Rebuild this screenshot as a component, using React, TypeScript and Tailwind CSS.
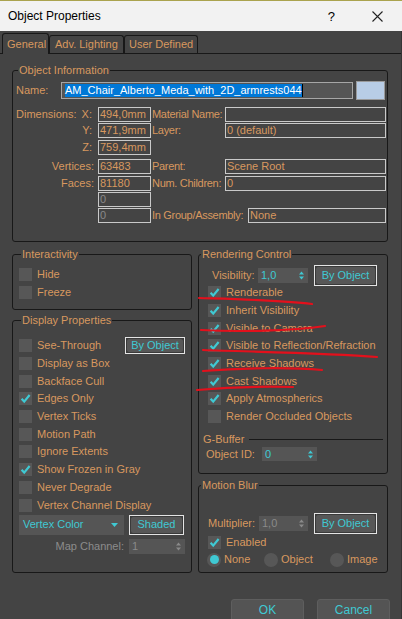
import React from 'react';

const orange = 'text-[#d8985f]';
const cyan = 'text-[#3fc9d3]';

function Tick() {
  return (
    <svg width="13" height="13" viewBox="0 0 13 13">
      <path d="M2.6 6.8 L5.2 9.6 L10.6 3" fill="none" stroke="#3fc9d3" strokeWidth="2.2" />
    </svg>
  );
}

function CheckRow({ label, on = false }: { label: string; on?: boolean }) {
  return (
    <div className="flex h-[17.7px] items-center">
      <span className="flex h-[13px] w-[13px] shrink-0 items-center justify-center bg-[#575757]">
        {on && <Tick />}
      </span>
      <span className={`ml-[5px] whitespace-nowrap ${orange}`}>{label}</span>
    </div>
  );
}

function Arrows({ color }: { color: string }) {
  return (
    <svg width="5" height="9" viewBox="0 0 5 9">
      <path d="M0 3.5L2.5 0.5L5 3.5Z M0 5.5L2.5 8.5L5 5.5Z" fill={color} />
    </svg>
  );
}

function Spinner({ value, className, disabled = false }: { value: string; className: string; disabled?: boolean }) {
  return (
    <div
      className={`flex shrink-0 items-center justify-between bg-[#555555] pl-[3px] pr-[4px] ${
        disabled ? 'text-[#8a8a8a]' : cyan
      } ${className}`}
    >
      <span>{value}</span>
      <Arrows color={disabled ? '#8a8a8a' : '#3fc9d3'} />
    </div>
  );
}

function OutlinedButton({ label, className }: { label: string; className: string }) {
  return (
    <div className={`shrink-0 border border-[#e4e4e4] bg-[#3a3a3a] p-[1px] ${className}`}>
      <div className={`flex h-full items-center justify-center rounded-[2px] bg-[#575757] ${cyan}`}>{label}</div>
    </div>
  );
}

function Group({ title, className, children }: { title: string; className?: string; children: React.ReactNode }) {
  return (
    <fieldset className={`rounded-[3px] border border-[#181818] ${className ?? ''}`}>
      <legend className={`ml-[2px] px-[1px] leading-[13px] ${orange}`}>{title}</legend>
      {children}
    </fieldset>
  );
}

function Field({ value = '', w, dim = false }: { value?: string; w: string; dim?: boolean }) {
  return (
    <div
      className={`flex h-[15px] shrink-0 items-center whitespace-nowrap border border-[#c9c9c9] pl-[1px] ${w} ${
        dim ? 'text-[#8a8a8a]' : orange
      }`}
    >
      {value}
    </div>
  );
}

function Label({ text, w }: { text: string; w: string }) {
  return <span className={`shrink-0 whitespace-nowrap pl-[1px] tracking-[-0.3px] ${w}`}>{text}</span>;
}

function Radio({ label, on = false, w }: { label: string; on?: boolean; w: string }) {
  return (
    <div className={`flex items-center ${w}`}>
      <span className="flex h-[14px] w-[14px] items-center justify-center rounded-full bg-[#575757]">
        {on && <span className="h-[9px] w-[9px] rounded-full bg-[#3fc9d3]" />}
      </span>
      <span className={`ml-[3px] ${orange}`}>{label}</span>
    </div>
  );
}

export default function App() {
  return (
    <div className="relative h-[619px] w-[402px] overflow-hidden bg-[#444444] font-['Liberation_Sans',Arial,sans-serif] text-[11px] leading-[13px]">
      {/* Title bar */}
      <div className="flex h-[31px] items-center border-t border-[#aaa34e] bg-[#f2f2f2] pl-[8px] text-[12px] text-black">
        <span>Object Properties</span>
        <span className="ml-auto text-[13px]">?</span>
        <svg className="ml-[37px] mr-[19px]" width="11" height="11" viewBox="0 0 11 11">
          <path d="M0.5 0.5L10.5 10.5M10.5 0.5L0.5 10.5" stroke="#222" strokeWidth="1.1" />
        </svg>
      </div>

      <div className="border-r border-[#353535]">
        {/* Tabs */}
        <div className="flex h-[23px] items-end border-b border-[#181818] pl-[2px]">
          <div className={`relative -mb-[1px] flex h-[21px] w-[47px] items-center rounded-t-[3px] border border-b-0 border-[#181818] bg-[#444444] pl-[4px] ${orange}`}>
            General
          </div>
          <div className={`flex h-[18px] w-[75px] items-center rounded-t-[3px] border border-b-0 border-[#181818] pl-[5px] ${orange}`}>
            Adv. Lighting
          </div>
          <div className={`flex h-[18px] w-[74px] items-center rounded-t-[3px] border border-b-0 border-[#181818] pl-[4px] ${orange}`}>
            User Defined
          </div>
        </div>

        <div className="px-[12px]">
          {/* Object Information */}
          <Group title="Object Information" className="mt-[10px] w-[376px] pb-[18px] pl-[3px] pt-[4px]">
            <div className={`flex h-[19px] items-center ${orange}`}>
              <span className="w-[45px]">Name:</span>
              <div className="flex h-[17px] w-[292px] items-center border border-[#a6a6a6] bg-[#555555] pl-[3px]">
                <span className="whitespace-nowrap bg-[#0078d7] leading-[13px] text-white">AM_Chair_Alberto_Meda_with_2D_armrests044</span>
                <span className="h-[13px] w-[1px] bg-black" />
              </div>
              <span className="ml-[3px] h-[19px] w-[29px] border border-[#9a9a9a] bg-[#b8cde6]" />
            </div>

            <div className={`mt-[7px] flex items-center ${orange}`}>
              <div className="flex w-[82px] shrink-0 justify-between pr-[6px]">
                <span>Dimensions:</span>
                <span>X:</span>
              </div>
              <Field w="w-[53px]" value="494,0mm" />
              <Label w="w-[74px]" text="Material Name:" />
              <Field w="w-[161px]" />
            </div>
            <div className={`mt-[1px] flex items-center ${orange}`}>
              <div className="w-[82px] shrink-0 pr-[6px] text-right">Y:</div>
              <Field w="w-[53px]" value="471,9mm" />
              <Label w="w-[74px]" text="Layer:" />
              <Field w="w-[161px]" value="0 (default)" />
            </div>
            <div className={`mt-[2px] flex items-center ${orange}`}>
              <div className="w-[82px] shrink-0 pr-[6px] text-right">Z:</div>
              <Field w="w-[53px]" value="759,4mm" />
            </div>
            <div className={`mt-[4px] flex items-center ${orange}`}>
              <div className="w-[82px] shrink-0 pr-[4px] text-right">Vertices:</div>
              <Field w="w-[53px]" value="63483" />
              <Label w="w-[74px]" text="Parent:" />
              <Field w="w-[161px]" value="Scene Root" />
            </div>
            <div className={`mt-[2px] flex items-center ${orange}`}>
              <div className="w-[82px] shrink-0 pr-[4px] text-right">Faces:</div>
              <Field w="w-[53px]" value="81180" />
              <Label w="w-[74px]" text="Num. Children:" />
              <Field w="w-[161px]" value="0" />
            </div>
            <div className="mt-[1px] flex items-center">
              <div className="w-[82px] shrink-0" />
              <Field w="w-[53px]" value="0" dim />
            </div>
            <div className={`mt-[1px] flex items-center ${orange}`}>
              <div className="w-[82px] shrink-0" />
              <Field w="w-[53px]" value="0" dim />
              <Label w="w-[97px]" text="In Group/Assembly:" />
              <Field w="w-[138px]" value="None" />
            </div>
          </Group>

          <div className="mt-[6px] flex gap-[6px]">
            {/* Left column */}
            <div className="w-[180px] shrink-0">
              <Group title="Interactivity" className="pb-[8px] pl-[6px] pt-[4px]">
                <div className="flex h-[18px] items-center">
                  <span className="h-[13px] w-[13px] bg-[#575757]" />
                  <span className={`ml-[5px] ${orange}`}>Hide</span>
                </div>
                <div className="flex h-[18px] items-center">
                  <span className="h-[13px] w-[13px] bg-[#575757]" />
                  <span className={`ml-[5px] ${orange}`}>Freeze</span>
                </div>
              </Group>

              <Group title="Display Properties" className="mt-[4px] pb-[18px] pl-[6px] pr-[6px] pt-[10px]">
                <div className="flex items-center justify-between">
                  <CheckRow label="See-Through" />
                  <OutlinedButton label="By Object" className="h-[17px] w-[60px]" />
                </div>
                <CheckRow label="Display as Box" />
                <CheckRow label="Backface Cull" />
                <CheckRow label="Edges Only" on />
                <CheckRow label="Vertex Ticks" />
                <CheckRow label="Motion Path" />
                <CheckRow label="Ignore Extents" />
                <CheckRow label="Show Frozen in Gray" on />
                <CheckRow label="Never Degrade" />
                <CheckRow label="Vertex Channel Display" />
                <div className="mt-[1px] flex h-[20px] items-center">
                  <div className={`flex h-[20px] w-[105px] shrink-0 items-center justify-between bg-[#555555] pl-[4px] pr-[6px] ${cyan}`}>
                    <span>Vertex Color</span>
                    <svg width="7" height="4" viewBox="0 0 7 4">
                      <path d="M0 0H7L3.5 4Z" fill="#3fc9d3" />
                    </svg>
                  </div>
                  <OutlinedButton label="Shaded" className="ml-[5px] h-[20px] w-[55px]" />
                </div>
                <div className="mt-[4px] flex h-[15px] items-center">
                  <span className="w-[105px] shrink-0 whitespace-nowrap text-right text-[#8c8c8c]">Map Channel:</span>
                  <Spinner value="1" disabled className="ml-[5px] h-[15px] w-[56px] bg-[#4f4f4f]" />
                </div>
              </Group>
            </div>

            {/* Right column */}
            <div className="w-[190px] shrink-0">
              <Group title="Rendering Control" className="pb-[11px] pt-[5px]">
                <div className="flex h-[18px] items-center">
                  <span className={`w-[59px] shrink-0 pl-[13px] ${orange}`}>Visibility:</span>
                  <Spinner value="1,0" className="h-[15px] w-[50px]" />
                  <OutlinedButton label="By Object" className="ml-[6px] h-[21px] w-[63px]" />
                </div>
                <div className="pl-[9px]">
                  <CheckRow label="Renderable" on />
                  <CheckRow label="Inherit Visibility" on />
                  <CheckRow label="Visible to Camera" on />
                  <CheckRow label="Visible to Reflection/Refraction" on />
                  <CheckRow label="Receive Shadows" on />
                  <CheckRow label="Cast Shadows" on />
                  <CheckRow label="Apply Atmospherics" on />
                  <CheckRow label="Render Occluded Objects" />
                </div>
                <fieldset className="mx-[4px] mt-[7px] border-t border-[#181818]">
                  <legend className={`pr-[5px] leading-[13px] ${orange}`}>G-Buffer</legend>
                  <div className="mt-[1px] flex h-[15px] items-center">
                    <span className={`w-[59px] shrink-0 pl-[3px] ${orange}`}>Object ID:</span>
                    <Spinner value="0" className="h-[14px] w-[55px]" />
                  </div>
                </fieldset>
              </Group>

              <Group title="Motion Blur" className="mt-[5px] pb-[4px] pt-[21px]">
                <div className="flex h-[21px] items-center">
                  <span className={`w-[60px] shrink-0 pl-[9px] ${orange}`}>Multiplier:</span>
                  <Spinner value="1,0" disabled className="h-[15px] w-[49px] bg-[#4f4f4f]" />
                  <OutlinedButton label="By Object" className="ml-[6px] h-[21px] w-[63px]" />
                </div>
                <div className="pl-[9px]">
                  <CheckRow label="Enabled" on />
                </div>
                <div className="flex h-[17px] items-center pl-[8px]">
                  <Radio label="None" on w="w-[57px]" />
                  <Radio label="Object" w="w-[66px]" />
                  <Radio label="Image" w="w-[56px]" />
                </div>
              </Group>
            </div>
          </div>
        </div>

        {/* Dialog buttons */}
        <div className="mt-[26px] flex justify-end gap-[13px] pr-[11px]">
          <div className={`flex h-[24px] w-[73px] justify-center rounded-[3px] border border-[#5e5e5e] bg-[#545454] pt-[4px] text-[12px] ${cyan}`}>
            OK
          </div>
          <div className={`flex h-[24px] w-[73px] justify-center rounded-[3px] border border-[#5e5e5e] bg-[#545454] pt-[4px] text-[12px] ${cyan}`}>
            Cancel
          </div>
        </div>
      </div>

      {/* Red pen marks over the rendering options */}
      <svg className="pointer-events-none absolute left-0 top-0" width="402" height="619" viewBox="0 0 402 619">
        <g fill="none" stroke="#e3101c" strokeWidth="2.2" strokeLinecap="round">
          <path d="M199 298 C230 299 280 300 312 304" />
          <path d="M201 330 C240 332 290 331 325 326" />
          <path d="M203 350 C260 352 330 353 377 357" />
          <path d="M203 371 C240 368 290 367 322 370" />
          <path d="M197 390 C220 388 260 386 293 387" />
        </g>
      </svg>
    </div>
  );
}
